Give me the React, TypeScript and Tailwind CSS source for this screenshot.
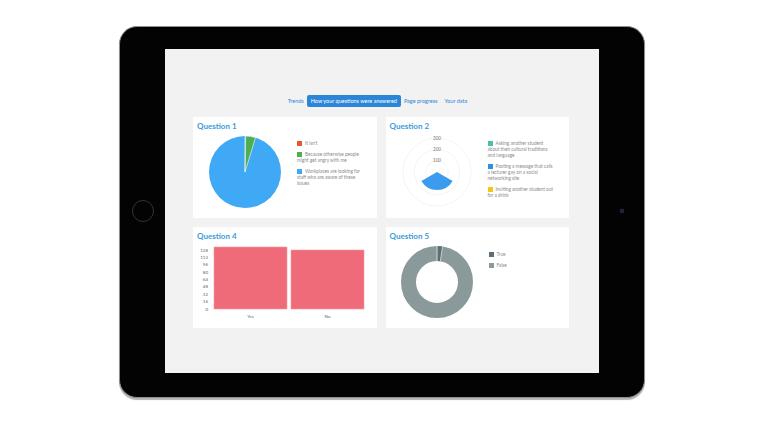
import React from 'react'

interface LegendItem {
  color: string
  lines: string[]
}

function Legend({ items, className = '' }: { items: LegendItem[]; className?: string }) {
  return (
    <div className={`flex flex-col gap-[5px] text-[4.7px] leading-[6px] text-[#8c8c8c] whitespace-nowrap ${className}`}>
      {items.map((item) => (
        <p key={item.lines[0]}>
          <span className={`inline-block w-[5px] h-[5px] mr-[3px] align-[-1px] ${item.color}`} />
          {item.lines.map((line, i) => (
            <React.Fragment key={line}>
              {i > 0 && <br />}
              {line}
            </React.Fragment>
          ))}
        </p>
      ))}
    </div>
  )
}

function Card({ title, children }: { title: string; children: React.ReactNode }) {
  return (
    <div className="h-[101px] bg-white flex flex-col">
      <h3 className="pl-[4px] pt-[4px] h-[15px] text-[8px] leading-[10px] font-bold text-[#3d9bd8]">{title}</h3>
      <div className="flex items-start">{children}</div>
    </div>
  )
}

function PieChart() {
  return (
    <svg width="72" height="80" viewBox="0 0 72 80" className="ml-[16px] shrink-0">
      <circle cx="36" cy="40" r="36" fill="#3fa9f5" />
      <path d="M36 40 L36.63 4 A36 36 0 0 1 46.53 5.57 Z" fill="#4caf50" stroke="#fff" strokeWidth="0.6" />
      <line x1="36" y1="40" x2="36" y2="4" stroke="#fff" strokeWidth="0.6" />
    </svg>
  )
}

function PolarChart() {
  const rings = [
    { r: 11.3, t: '100' },
    { r: 22.7, t: '200' },
    { r: 34, t: '300' },
  ]
  return (
    <svg width="80" height="80" viewBox="0 0 80 80" className="ml-[11px] shrink-0">
      {rings.map((l) => (
        <circle key={l.t} cx="40" cy="40" r={l.r} fill="none" stroke="#ececec" strokeWidth="0.6" />
      ))}
      <path d="M40 40 L55.6 49 A18 18 0 0 1 24.4 49 Z" fill="#3a9bef" />
      {rings.map((l) => (
        <g key={'t' + l.t}>
          <rect x="35.5" y={40 - l.r - 2.4} width="9" height="4.8" fill="#fff" />
          <text x="40" y={40 - l.r + 1.7} textAnchor="middle" fontSize="4.7" fill="#777" fontFamily="Lato, sans-serif">
            {l.t}
          </text>
        </g>
      ))}
    </svg>
  )
}

function BarChart() {
  const ticks = [128, 112, 96, 80, 64, 48, 32, 16, 0]
  return (
    <svg width="180" height="80" viewBox="0 0 180 80" className="ml-[2px] shrink-0">
      {ticks.map((t, i) => (
        <text key={t} x="13" y={8 + i * 7.375 + 1.5} textAnchor="end" fontSize="4.5" fill="#666" fontFamily="Lato, sans-serif">
          {t}
        </text>
      ))}
      <rect x="19" y="5" width="73" height="62" fill="#ef6b79" stroke="#f59aa4" strokeWidth="0.6" />
      <rect x="96" y="8" width="73" height="59" fill="#ef6b79" stroke="#f59aa4" strokeWidth="0.6" />
      <text x="55.5" y="75.5" textAnchor="middle" fontSize="4.5" fill="#666" fontFamily="Lato, sans-serif">
        Yes
      </text>
      <text x="132.5" y="75.5" textAnchor="middle" fontSize="4.5" fill="#666" fontFamily="Lato, sans-serif">
        No
      </text>
    </svg>
  )
}

function DonutChart() {
  return (
    <svg width="80" height="80" viewBox="0 0 80 80" className="ml-[11px] shrink-0">
      <circle cx="40" cy="40" r="28.5" fill="none" stroke="#8a999a" strokeWidth="15" />
      <path d="M40.5 4 A36 36 0 0 1 45.6 4.4 L43.3 19.3 A21 21 0 0 0 40.3 19 Z" fill="#5e6e74" />
      <line x1="40" y1="4" x2="40" y2="19" stroke="#fff" strokeWidth="0.6" />
      <line x1="45.6" y1="4.4" x2="43.3" y2="19.3" stroke="#fff" strokeWidth="0.6" />
    </svg>
  )
}

export default function App() {
  return (
    <div className="w-[768px] h-[431px] bg-white overflow-hidden pt-[26px] pl-[119px] font-['Lato','Liberation_Sans',sans-serif]">
      <div className="w-[526px] h-[372px] rounded-[18px] bg-[#030303] border border-[#8f8f8f] shadow-[0_2px_1px_#b5b5b5] flex pt-[22px] pb-[24px]">
        <div className="w-[45px] flex items-center justify-center">
          <div className="w-[22px] h-[22px] rounded-full border-[1.5px] border-[#333]" />
        </div>
        <div className="w-[434px] h-[324px] bg-[#f2f2f2] flex flex-col items-center pt-[46px]">
          <nav className="flex items-center h-[12px] text-[5.5px] text-[#2b87d8] ml-[-8px]">
            <span className="px-[3px]">Trends</span>
            <span className="h-[12px] px-[4px] flex items-center rounded-[2px] bg-[#2b86d7] text-white">
              How your questions were answered
            </span>
            <span className="px-[3px]">Page progress</span>
            <span className="px-[4px]">Your data</span>
          </nav>
          <div className="grid grid-cols-2 gap-[9px] w-[376px] mt-[10px] mr-[2px]">
            <Card title="Question 1">
              <PieChart />
              <Legend
                className="ml-[16px] mt-[8px]"
                items={[
                  { color: 'bg-[#e8572a]', lines: ["It isn't"] },
                  { color: 'bg-[#4caf50]', lines: ['Because otherwise people', 'might get angry with me'] },
                  { color: 'bg-[#3fa9f5]', lines: ['Workplaces are looking for', 'staff who are aware of these', 'issues'] },
                ]}
              />
            </Card>
            <Card title="Question 2">
              <PolarChart />
              <Legend
                className="ml-[11px] mt-[8px]"
                items={[
                  { color: 'bg-[#4dbdb0]', lines: ['Asking another student', 'about their cultural traditions', 'and language'] },
                  { color: 'bg-[#2f8fe8]', lines: ['Posting a message that calls', 'a lecturer gay on a social', 'networking site'] },
                  { color: 'bg-[#f5c518]', lines: ['Inviting another student out', 'for a drink'] },
                ]}
              />
            </Card>
            <Card title="Question 4">
              <BarChart />
            </Card>
            <Card title="Question 5">
              <DonutChart />
              <Legend
                className="ml-[12px] mt-[9px]"
                items={[
                  { color: 'bg-[#5e6e74]', lines: ['True'] },
                  { color: 'bg-[#8a999a]', lines: ['False'] },
                ]}
              />
            </Card>
          </div>
        </div>
        <div className="w-[45px] flex items-center justify-center">
          <div className="w-[4px] h-[4px] rounded-full bg-[#1c2238] shadow-[0_0_1px_#4a5578]" />
        </div>
      </div>
    </div>
  )
}
